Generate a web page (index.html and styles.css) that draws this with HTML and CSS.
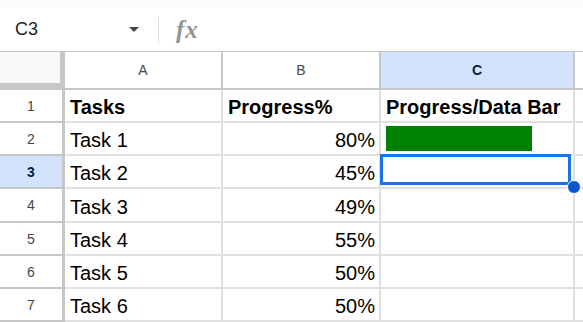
FILE: index.html
```html
<!DOCTYPE html>
<html>
 <head>
  <meta charset="utf-8">
  <title>Progress sheet</title>
  <link rel="stylesheet" href="styles.css">
 </head>
 <body>
  <div class="topstrip"></div>
  <div class="formulaBar">
   <div class="nameBox">
    <span class="cellRef">C3</span>
    <span class="caret"></span>
   </div>
   <div class="divider"></div>
   <span class="fx">fx</span>
  </div>
  <div class="sheet">
   <div class="corner"></div>
   <div class="colHead">A</div>
   <div class="colHead">B</div>
   <div class="colHead active">C</div>
   <div class="colHead last"></div>

   <div class="rowHead">1</div>
   <div class="cell bold">Tasks</div>
   <div class="cell bold">Progress%</div>
   <div class="cell bold">Progress/Data Bar</div>
   <div class="cell last"></div>

   <div class="rowHead">2</div>
   <div class="cell">Task 1</div>
   <div class="cell num">80%</div>
   <div class="cell barCell"><div class="bar" style="width: 80%"></div></div>
   <div class="cell last"></div>

   <div class="rowHead active">3</div>
   <div class="cell">Task 2</div>
   <div class="cell num">45%</div>
   <div class="cell selected"><div class="selBox"></div><div class="handle"></div></div>
   <div class="cell last"></div>

   <div class="rowHead">4</div>
   <div class="cell">Task 3</div>
   <div class="cell num">49%</div>
   <div class="cell"></div>
   <div class="cell last"></div>

   <div class="rowHead">5</div>
   <div class="cell">Task 4</div>
   <div class="cell num">55%</div>
   <div class="cell"></div>
   <div class="cell last"></div>

   <div class="rowHead">6</div>
   <div class="cell">Task 5</div>
   <div class="cell num">50%</div>
   <div class="cell"></div>
   <div class="cell last"></div>

   <div class="rowHead">7</div>
   <div class="cell">Task 6</div>
   <div class="cell num">50%</div>
   <div class="cell"></div>
   <div class="cell last"></div>
  </div>
 </body>
</html>
```

FILE: styles.css
```css
    * {
	box-sizing: border-box;
    }

    html, body {
	margin: 0px;
	padding: 0px;
	background-color: #FFFFFF;
	font-family: "Liberation Sans", Arial, sans-serif;
	overflow: hidden;
    }

    div.topstrip {
	height: 8px;
	background-color: #F9FBFD;
    }

    div.formulaBar {
	display: flex;
	align-items: center;
	height: 44px;
	border-bottom: 1px solid #C7C7C7;
    }

    div.nameBox {
	display: flex;
	align-items: center;
	justify-content: space-between;
	width: 158px;
	padding-left: 15px;
	padding-right: 19px;
    }

    span.cellRef {
	font-size: 18px;
	color: #1F1F1F;
    }

    span.caret {
	width: 0px;
	height: 0px;
	border-left: 5.5px solid transparent;
	border-right: 5.5px solid transparent;
	border-top: 5.5px solid #444746;
    }

    div.divider {
	width: 1px;
	height: 26px;
	background-color: #DADCE0;
    }

    span.fx {
	margin-left: 17px;
	font-family: "Liberation Serif", serif;
	font-style: italic;
	font-weight: bold;
	font-size: 25px;
	letter-spacing: 1px;
	color: #919497;
    }

    div.sheet {
	display: grid;
	grid-template-columns: 65px 158px 158px 194px 1fr;
	grid-template-rows: 38px 33px 33px 33px 34px 33px 33px 33px;
    }

    div.corner {
	background-color: #F8F9FA;
	border-right: 5px solid #C4C7C5;
	border-bottom: 7px solid #C4C7C5;
    }

    div.colHead {
	display: flex;
	align-items: center;
	justify-content: center;
	font-size: 14px;
	color: #444746;
	border-right: 2px solid #C4C7C5;
	border-bottom: 2px solid #C4C7C5;
    }

    div.colHead.last {
	border-right: 0px;
    }

    div.rowHead {
	display: flex;
	align-items: center;
	justify-content: center;
	font-size: 14px;
	color: #444746;
	border-right: 3px solid #C4C7C5;
	border-bottom: 2px solid #C4C7C5;
    }

    div.active {
	background-color: #D3E3FD;
	color: #041E49;
	font-weight: bold;
    }

    div.cell {
	position: relative;
	display: flex;
	align-items: flex-end;
	padding: 0px 4px 3px 5px;
	font-size: 20px;
	line-height: 22px;
	color: #000000;
	white-space: nowrap;
	border-right: 2px solid #E1E1E1;
	border-bottom: 2px solid #E1E1E1;
    }

    div.cell.last {
	border-right: 0px;
    }

    div.cell.selected {
	z-index: 2;
    }

    div.bold {
	font-weight: bold;
    }

    div.num {
	justify-content: flex-end;
    }

    div.barCell {
	padding: 3px 5px;
    }

    div.bar {
	height: 25px;
	background-color: #008000;
    }

    div.selBox {
	position: absolute;
	top: -2px;
	left: -1px;
	right: 2px;
	bottom: 2px;
	border: 3px solid #1A73E8;
    }

    div.handle {
	position: absolute;
	left: 186px;
	top: 24px;
	width: 14px;
	height: 14px;
	border-radius: 50%;
	background-color: #0B57D0;
	border: 1px solid #FFFFFF;
    }
```
